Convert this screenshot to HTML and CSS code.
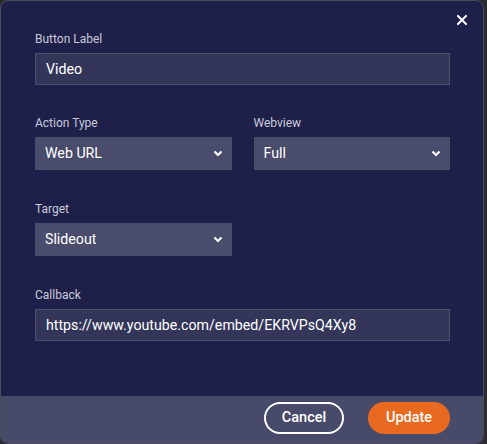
FILE: index.html
```html
<!DOCTYPE html>
<html>
<head>
<meta charset="utf-8">
<link rel="stylesheet" href="styles.css">
</head>
<body>
<div class="modal">
  <div class="modal-body">
    <div class="close-row">
      <button class="close" aria-label="Close">
        <svg width="10" height="10" viewBox="0 0 10 10"><path d="M1 1L9 9M9 1L1 9" stroke="#fff" stroke-width="2" stroke-linecap="square"/></svg>
      </button>
    </div>
    <div class="field first">
      <label class="label">Button Label</label>
      <div class="input">Video</div>
    </div>
    <div class="row">
      <div class="field half">
        <label class="label">Action Type</label>
        <div class="select"><span>Web URL</span><svg class="chev" width="10" height="7" viewBox="0 0 10 7"><path d="M1.5 1.5L5 5L8.5 1.5" fill="none" stroke="#fff" stroke-width="2.2"/></svg></div>
      </div>
      <div class="field half">
        <label class="label">Webview</label>
        <div class="select"><span>Full</span><svg class="chev" width="10" height="7" viewBox="0 0 10 7"><path d="M1.5 1.5L5 5L8.5 1.5" fill="none" stroke="#fff" stroke-width="2.2"/></svg></div>
      </div>
    </div>
    <div class="row">
      <div class="field half">
        <label class="label">Target</label>
        <div class="select"><span>Slideout</span><svg class="chev" width="10" height="7" viewBox="0 0 10 7"><path d="M1.5 1.5L5 5L8.5 1.5" fill="none" stroke="#fff" stroke-width="2.2"/></svg></div>
      </div>
    </div>
    <div class="field">
      <label class="label">Callback</label>
      <div class="input">https://www.youtube.com/embed/EKRVPsQ4Xy8</div>
    </div>
  </div>
  <div class="footer">
    <button class="btn btn-outline">Cancel</button>
    <button class="btn btn-primary">Update</button>
  </div>
</div>
</body>
</html>
```
FILE: styles.css
```css
* { box-sizing: border-box; }
html, body { margin: 0; padding: 0; }
body {
  background: #2b2b30;
  font-family: Roboto, "Noto Sans", sans-serif;
  width: 487px;
  height: 444px;
  overflow: hidden;
}
.modal {
  width: 484px;
  height: 444px;
  background: #1f2049;
  border: 1px solid #4b4c60;
  border-radius: 8px;
  display: flex;
  flex-direction: column;
  overflow: hidden;
}
.modal-body {
  flex: 1;
  padding: 0 33px 0 34px;
}
.close-row {
  display: flex;
  justify-content: flex-end;
  height: 31px;
  padding-top: 14px;
  margin-right: -17px;
}
.close {
  background: none;
  border: 0;
  padding: 0;
  width: 10px;
  height: 10px;
  cursor: pointer;
  display: block;
}
.close svg { display: block; }
.field { display: flex; flex-direction: column; }
.row, .modal-body > .field { margin-top: 32px; }
.modal-body > .field.first { margin-top: 0; }
.first + .row { margin-top: 31px; }
.row { display: grid; grid-template-columns: 1fr 1fr; gap: 22px; }
.label {
  font-size: 12px;
  line-height: 14px;
  color: #c9cad9;
  margin-bottom: 7px;
}
.input {
  height: 32px;
  background: #343659;
  border: 1px solid #4c4e70;
  color: #fff;
  font-size: 14.2px;
  line-height: 30px;
  padding: 0 10px;
}
.select {
  height: 33px;
  background: #4a4c6b;
  color: #fff;
  font-size: 14.2px;
  line-height: 33px;
  padding: 0 10px;
  display: flex;
  align-items: center;
  justify-content: space-between;
}
.chev { display: block; margin-right: -1px; }
.footer {
  height: 47px;
  background: #484a69;
  display: flex;
  justify-content: flex-end;
  align-items: center;
  gap: 24px;
  padding: 0 33px 4px 0;
}
.btn {
  height: 32px;
  border-radius: 16px;
  font-family: Roboto, "Noto Sans", sans-serif;
  font-size: 14.5px;
  font-weight: 500;
  color: #fff;
  padding: 0;
  cursor: pointer;
}
.btn-outline {
  width: 80px;
  background: transparent;
  border: 2px solid #fff;
}
.btn-primary {
  width: 82px;
  background: #e8691f;
  border: 0;
}
```
